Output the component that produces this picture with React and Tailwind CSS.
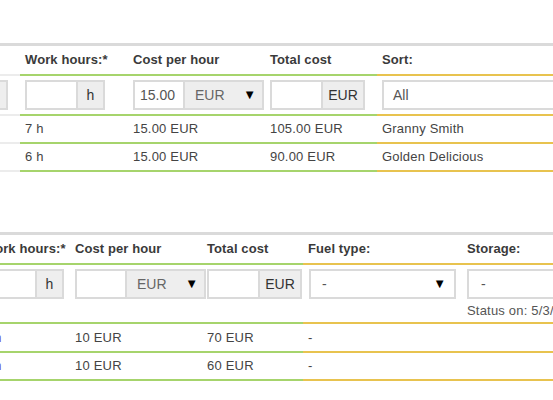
import React from "react";

function Cell({ w, line, h, extra = "", children }) {
  return (
    <div className={`${w} ${line} ${h} shrink-0 border-b-2 pl-[5px] flex ${extra}`}>
      {children}
    </div>
  );
}

function InputBox({ w, value = "" }) {
  return (
    <div className={`${w} h-[30px] shrink-0 border-2 border-[#dadada] bg-white flex items-center pl-[5px] text-[14px] text-[#555]`}>
      {value}
    </div>
  );
}

function Addon({ w, text }) {
  return (
    <div className={`${w} h-[30px] shrink-0 border-2 border-l-0 border-[#dadada] bg-[#eeeeee] flex items-center justify-center text-[14px] text-[#333]`}>
      {text}
    </div>
  );
}

function GraySelect({ w, text }) {
  return (
    <div className={`${w} h-[30px] shrink-0 border-2 border-l-0 border-[#dadada] bg-[#eeeeee] flex items-center justify-between pl-[10px] pr-[6px] text-[14px] text-[#666]`}>
      <span>{text}</span>
      <span className="text-[13px] text-black">▼</span>
    </div>
  );
}

function WhiteSelect({ w, text, arrow = false, pl = "pl-[9px]" }) {
  return (
    <div className={`${w} ${pl} h-[30px] shrink-0 border-2 border-[#dadada] bg-white flex items-center justify-between pr-[8px] text-[14px] text-[#555]`}>
      <span>{text}</span>
      {arrow && <span className="text-[13px] text-black">▼</span>}
    </div>
  );
}

const head = "items-center text-[13px] font-bold text-[#3a3a3a] tracking-[0.1px]";
const body = "items-center text-[13px] text-[#444] tracking-[0.2px]";

export default function App() {
  return (
    <div className="w-[553px] h-[400px] overflow-hidden bg-white font-['Liberation_Sans',Arial,sans-serif]">
      <div className="h-[43px]" />
      <div className="h-[3px] w-full bg-[#dadada]" />

      {/* Top table */}
      <div className="flex w-max">
        <Cell w="w-[20px]" line="border-[#ececec]" h="h-[30px]" />
        <Cell w="w-[108px]" line="border-[#a6d46c]" h="h-[30px]" extra={head}>Work hours:*</Cell>
        <Cell w="w-[137px]" line="border-[#a6d46c]" h="h-[30px]" extra={head}>Cost per hour</Cell>
        <Cell w="w-[112px]" line="border-[#a6d46c]" h="h-[30px]" extra={head}>Total cost</Cell>
        <Cell w="w-[200px]" line="border-[#e8c34f]" h="h-[30px]" extra={head}>Sort:</Cell>
      </div>
      <div className="flex w-max">
        <div className="w-[20px] h-[40px] shrink-0 border-b-2 border-[#ececec] flex items-center">
          <div className="w-[8px] h-[30px] border-2 border-l-0 border-[#dadada] bg-[#eeeeee]" />
        </div>
        <Cell w="w-[108px]" line="border-[#a6d46c]" h="h-[40px]" extra="items-center">
          <InputBox w="w-[53px]" />
          <Addon w="w-[27px]" text="h" />
        </Cell>
        <Cell w="w-[137px]" line="border-[#a6d46c]" h="h-[40px]" extra="items-center">
          <InputBox w="w-[52px]" value="15.00" />
          <GraySelect w="w-[79px]" text="EUR" />
        </Cell>
        <Cell w="w-[112px]" line="border-[#a6d46c]" h="h-[40px]" extra="items-center">
          <InputBox w="w-[53px]" />
          <Addon w="w-[42px]" text="EUR" />
        </Cell>
        <Cell w="w-[200px]" line="border-[#e8c34f]" h="h-[40px]" extra="items-center">
          <WhiteSelect w="w-[220px]" text="All" />
        </Cell>
      </div>
      {[
        ["7 h", "15.00 EUR", "105.00 EUR", "Granny Smith"],
        ["6 h", "15.00 EUR", "90.00 EUR", "Golden Delicious"],
      ].map((r, i) => (
        <div key={i} className="flex w-max">
          <Cell w="w-[20px]" line="border-[#ececec]" h="h-[28px]" />
          <Cell w="w-[108px]" line="border-[#a6d46c]" h="h-[28px]" extra={body}>{r[0]}</Cell>
          <Cell w="w-[137px]" line="border-[#a6d46c]" h="h-[28px]" extra={body}>{r[1]}</Cell>
          <Cell w="w-[112px]" line="border-[#a6d46c]" h="h-[28px]" extra={body}>{r[2]}</Cell>
          <Cell w="w-[200px]" line="border-[#e8c34f]" h="h-[28px]" extra={body}>{r[3]}</Cell>
        </div>
      ))}

      <div className="h-[60px]" />
      <div className="h-[3px] w-full bg-[#dadada]" />

      {/* Bottom table */}
      <div className="-ml-[22px]">
        <div className="flex w-max">
          <Cell w="w-[92px]" line="border-[#a6d46c]" h="h-[30px]" extra={head}>Work hours:*</Cell>
          <Cell w="w-[132px]" line="border-[#a6d46c]" h="h-[30px]" extra={head}>Cost per hour</Cell>
          <Cell w="w-[101px]" line="border-[#a6d46c]" h="h-[30px]" extra={head}>Total cost</Cell>
          <Cell w="w-[159px]" line="border-[#e8c34f]" h="h-[30px]" extra={head}>Fuel type:</Cell>
          <Cell w="w-[200px]" line="border-[#e8c34f]" h="h-[30px]" extra={head}>Storage:</Cell>
        </div>
        <div className="flex w-max">
          <Cell w="w-[92px]" line="border-[#a6d46c]" h="h-[59px]" extra="items-start pt-[4px]">
            <InputBox w="w-[54px]" />
            <Addon w="w-[27px]" text="h" />
          </Cell>
          <Cell w="w-[132px]" line="border-[#a6d46c]" h="h-[59px]" extra="items-start pt-[4px]">
            <InputBox w="w-[52px]" />
            <GraySelect w="w-[79px]" text="EUR" />
          </Cell>
          <Cell w="w-[101px]" line="border-[#a6d46c]" h="h-[59px]" extra="items-start pt-[4px]">
            <InputBox w="w-[53px]" />
            <Addon w="w-[42px]" text="EUR" />
          </Cell>
          <Cell w="w-[159px]" line="border-[#e8c34f]" h="h-[59px]" extra="items-start pt-[4px]">
            <div className="ml-[1px]">
              <WhiteSelect w="w-[147px]" text="-" arrow pl="pl-[11px]" />
            </div>
          </Cell>
          <Cell w="w-[200px]" line="border-[#e8c34f]" h="h-[59px]" extra="flex-col items-start pt-[4px]">
            <WhiteSelect w="w-[220px]" text="-" pl="pl-[12px]" />
            <div className="mt-[4px] text-[13px] leading-[16px] text-[#555] tracking-[0.2px] whitespace-nowrap">Status on: 5/3/2016</div>
          </Cell>
        </div>
        {[
          ["7 h", "10 EUR", "70 EUR", "-", "h-[29px]"],
          ["6 h", "10 EUR", "60 EUR", "-", "h-[28px]"],
        ].map((r, i) => (
          <div key={i} className="flex w-max">
            <Cell w="w-[92px]" line="border-[#a6d46c]" h={r[4]} extra="items-center text-[13px] text-[#6a56cf] tracking-[0.2px]">{r[0]}</Cell>
            <Cell w="w-[132px]" line="border-[#a6d46c]" h={r[4]} extra={body}>{r[1]}</Cell>
            <Cell w="w-[101px]" line="border-[#a6d46c]" h={r[4]} extra={body}>{r[2]}</Cell>
            <Cell w="w-[159px]" line="border-[#e8c34f]" h={r[4]} extra={body}>{r[3]}</Cell>
            <Cell w="w-[200px]" line="border-[#e8c34f]" h={r[4]} extra={body} />
          </div>
        ))}
      </div>
    </div>
  );
}
